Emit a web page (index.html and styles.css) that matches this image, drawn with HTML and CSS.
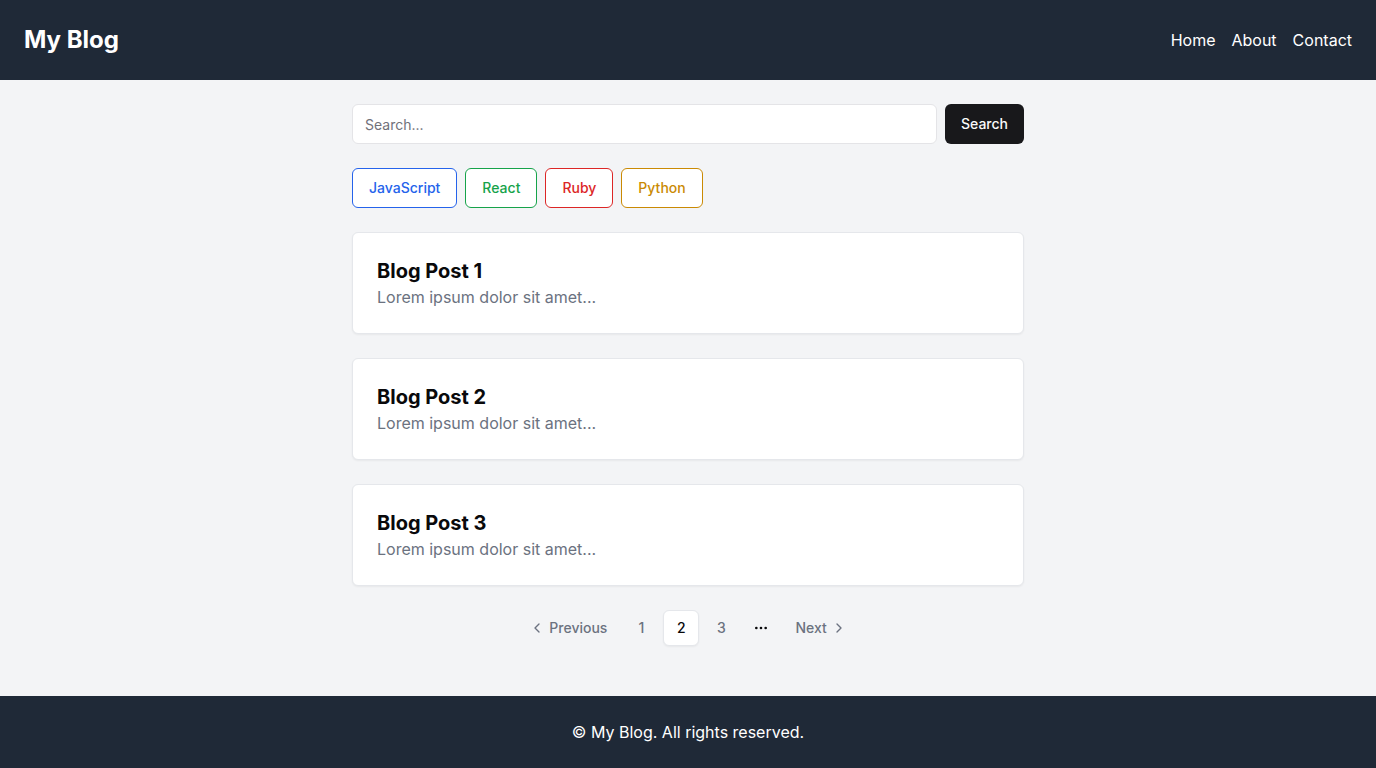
FILE: index.html
```html
<!DOCTYPE html>
<html lang="en">
<head>
<meta charset="utf-8">
<meta name="viewport" content="width=device-width, initial-scale=1">
<title>My Blog</title>
<link rel="stylesheet" href="styles.css">
</head>
<body class="page">
<header class="header">
  <h1 class="brand">My Blog</h1>
  <nav class="nav" aria-label="Main">
    <a href="#home">Home</a>
    <a href="#about">About</a>
    <a href="#contact">Contact</a>
  </nav>
</header>
<main class="main">
  <form class="search" role="search">
    <input class="search-input" type="text" placeholder="Search..." aria-label="Search posts">
    <button class="search-button" type="submit">Search</button>
  </form>
  <div class="tags">
    <button class="tag tag-blue" type="button">JavaScript</button>
    <button class="tag tag-green" type="button">React</button>
    <button class="tag tag-red" type="button">Ruby</button>
    <button class="tag tag-yellow" type="button">Python</button>
  </div>
  <section class="posts">
    <article class="card">
      <h2 class="card-title">Blog Post 1</h2>
      <p class="card-text">Lorem ipsum dolor sit amet...</p>
    </article>
    <article class="card">
      <h2 class="card-title">Blog Post 2</h2>
      <p class="card-text">Lorem ipsum dolor sit amet...</p>
    </article>
    <article class="card">
      <h2 class="card-title">Blog Post 3</h2>
      <p class="card-text">Lorem ipsum dolor sit amet...</p>
    </article>
  </section>
  <nav class="pagination" aria-label="Pagination">
    <a class="page-link page-prev" href="#previous"><svg class="icon" viewBox="0 0 24 24" aria-hidden="true"><path d="m15 18-6-6 6-6"/></svg>Previous</a>
    <a class="page-link page-number" href="#page-1">1</a>
    <a class="page-link page-number page-current" href="#page-2" aria-current="page">2</a>
    <a class="page-link page-number" href="#page-3">3</a>
    <span class="page-more"><svg class="icon" viewBox="0 0 24 24" aria-hidden="true"><circle cx="12" cy="12" r="1"/><circle cx="19" cy="12" r="1"/><circle cx="5" cy="12" r="1"/></svg></span>
    <a class="page-link page-next" href="#next">Next<svg class="icon" viewBox="0 0 24 24" aria-hidden="true"><path d="m9 18 6-6-6-6"/></svg></a>
  </nav>
</main>
<footer class="footer">
  <p class="footer-text">© My Blog. All rights reserved.</p>
</footer>
</body>
</html>
```
FILE: styles.css
```css
*,
*::before,
*::after {
  box-sizing: border-box;
}

h1,
h2,
p {
  margin: 0;
}

a {
  color: inherit;
  text-decoration: none;
}

button,
input {
  font: inherit;
}

button {
  cursor: pointer;
}

.page {
  display: flex;
  flex-direction: column;
  min-height: 100vh;
  margin: 0;
  background: #f3f4f6;
  color: #09090b;
  font-family: Inter, "Liberation Sans", sans-serif;
  font-size: 16px;
  line-height: 24px;
}

.header {
  display: flex;
  align-items: center;
  justify-content: space-between;
  padding: 24px;
  background: #1f2937;
  color: #fff;
}

.brand {
  font-size: 24px;
  font-weight: 700;
  line-height: 32px;
}

.nav {
  display: flex;
  gap: 16px;
}

.main {
  flex: 1;
  display: flex;
  flex-direction: column;
  gap: 24px;
  width: 100%;
  max-width: 720px;
  margin: 0 auto;
  padding: 24px;
}

.search {
  display: flex;
  gap: 8px;
}

.search-input {
  flex: 1;
  min-width: 0;
  height: 40px;
  padding: 8px 12px;
  border: 1px solid #e4e4e7;
  border-radius: 6px;
  background: #fff;
  color: #09090b;
  font-size: 14px;
  line-height: 20px;
}

.search-input::placeholder {
  color: #71717a;
  opacity: 1;
}

.search-button,
.tag {
  height: 40px;
  padding: 0 16px;
  border-radius: 6px;
  font-size: 14px;
  font-weight: 500;
  line-height: 20px;
}

.search-button {
  border: 0;
  background: #18181b;
  color: #fafafa;
}

.tags {
  display: flex;
  flex-wrap: wrap;
  gap: 8px;
}

.tag {
  border: 1px solid currentColor;
  background: #fff;
}

.tag-blue {
  color: #2563eb;
}

.tag-green {
  color: #16a34a;
}

.tag-red {
  color: #dc2626;
}

.tag-yellow {
  color: #ca8a04;
}

.posts {
  display: grid;
  gap: 24px;
}

.card {
  padding: 24px;
  border: 1px solid #e5e7eb;
  border-radius: 6px;
  background: #fff;
  box-shadow: 0 1px 2px rgba(0, 0, 0, 0.05);
}

.card-title {
  font-size: 20px;
  font-weight: 700;
  line-height: 28px;
}

.card-text {
  color: #6b7280;
}

.pagination {
  display: flex;
  align-items: center;
  justify-content: center;
  gap: 4px;
  color: #6b7280;
  font-size: 14px;
  font-weight: 500;
  line-height: 20px;
}

.page-link,
.page-more {
  display: flex;
  align-items: center;
  justify-content: center;
  height: 36px;
}

.page-link {
  gap: 4px;
  border-radius: 6px;
}

.page-number,
.page-more {
  width: 36px;
}

.page-prev,
.page-next {
  padding: 0 12px;
}

.page-current {
  border: 1px solid #e5e7eb;
  background: #fff;
  color: #09090b;
  box-shadow: 0 1px 2px rgba(0, 0, 0, 0.05);
}

.page-more {
  color: #09090b;
}

.icon {
  width: 16px;
  height: 16px;
  fill: none;
  stroke: currentColor;
  stroke-width: 2;
  stroke-linecap: round;
  stroke-linejoin: round;
}

.footer {
  padding: 24px;
  background: #1f2937;
  color: #fff;
  text-align: center;
}
```
